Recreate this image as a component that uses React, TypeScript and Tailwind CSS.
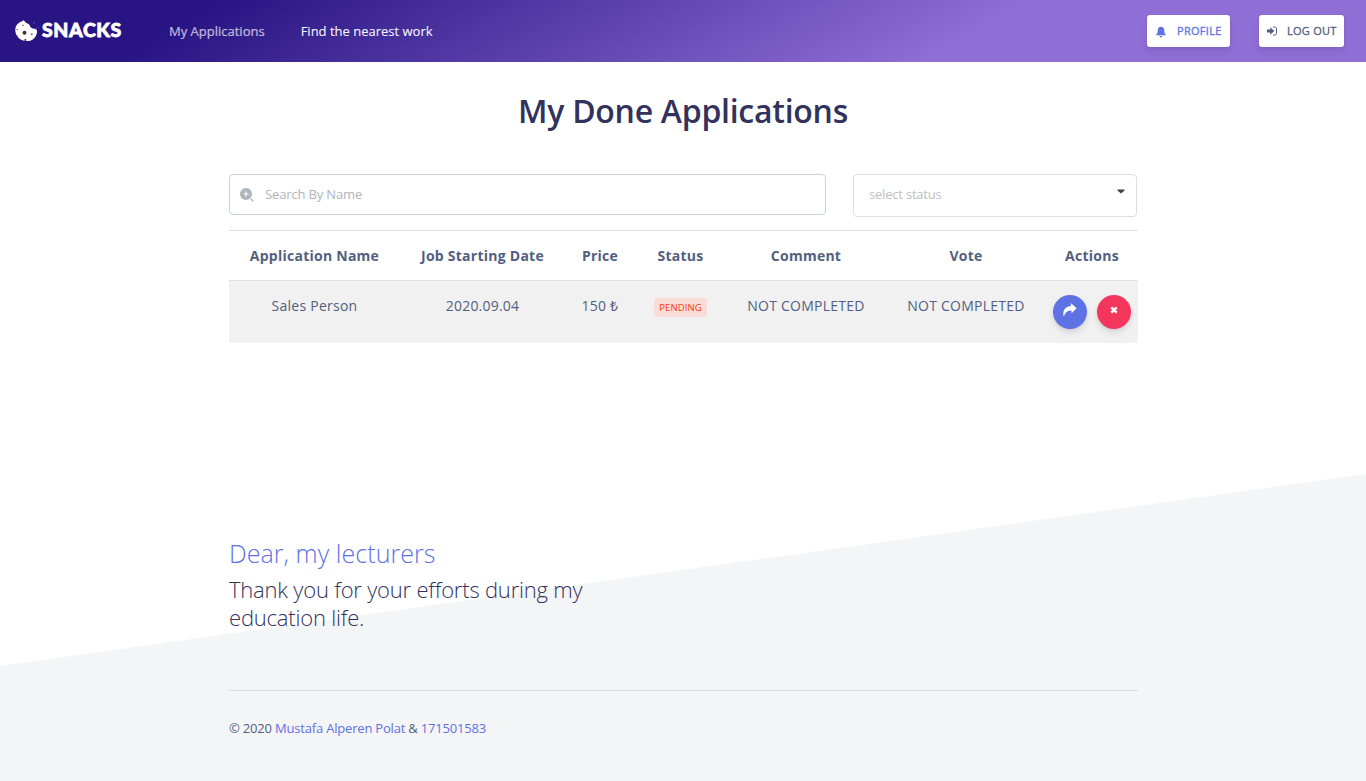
const columns = ["Application Name", "Job Starting Date", "Price", "Status", "Comment", "Vote", "Actions"];
const gridCols = "grid grid-cols-[171px_165px_70px_91px_160px_160px_92px] text-center";

function Cookie() {
  return (
    <svg width="26" height="26" viewBox="0 0 26 26" className="block">
      <path d="M9.500 2.200C11 3 11.200 4.300 12.500 5c1.200.7 2.300.8 3 2 .7 1.300 1 2.200 2.300 3 1.500.9 3.300.5 4.500 1.500 1.200 1 .7 3.500 0 5.500-1.500 4.200-5.600 6.400-10 6C6 22.600 1.900 18.600 1.300 13 1 9.200 2.200 6.600 4.800 4.900 6 4.100 8 3.200 9.500 2.200z" fill="#fff" />
      <circle cx="10.500" cy="14.800" r="2" fill="#4b2f2c" />
      <circle cx="9" cy="7.200" r=".8" fill="#756482" />
      <circle cx="3.200" cy="11.500" r=".8" fill="#756482" />
      <circle cx="17.800" cy="16.200" r=".9" fill="#6e5e62" />
      <circle cx="11.300" cy="22" r="1" fill="#4b2f2c" />
      <circle cx="3.400" cy="18.300" r=".7" fill="#756482" />
      <circle cx="20" cy="5" r="1" fill="#47379a" />
      <circle cx="22.300" cy="10.300" r=".7" fill="#5d4ca8" />
      <circle cx="24.600" cy="9.500" r=".6" fill="#47379a" />
    </svg>
  );
}

function Bell() {
  return (
    <svg width="10" height="12" viewBox="0 0 10 12" fill="currentColor" className="mt-[1px]">
      <path d="M5 .8c2 0 3.100 1.300 3.200 3.100.1 2.300.3 3.400 1.400 4.400v1H.4v-1C1.500 7.300 1.700 6.200 1.800 3.900 1.900 2.100 3 .8 5 .8zM3.400 10h3.200c-.2.8-.8 1.300-1.600 1.300S3.600 10.800 3.400 10z" />
    </svg>
  );
}

function SignIn() {
  return (
    <svg width="10" height="10" viewBox="0 0 10 10" fill="currentColor">
      <path d="M0 3.400h3.200V1.200L7.300 5 3.200 8.800V6.600H0z" />
      <path d="M6 1h1.700C8.900 1 9.500 1.600 9.500 2.700v4.600C9.500 8.400 8.900 9 7.700 9H6" fill="none" stroke="currentColor" strokeWidth="1" />
    </svg>
  );
}

function Header() {
  return (
    <header className="flex h-[62px] items-center bg-[linear-gradient(150deg,#281483_15%,#8f6ed5_70%)] pl-[14px] pr-[22px]">
      <div className="flex w-[155px] items-center">
        <Cookie />
        <span className="-mt-[2px] ml-[2px] font-[Lato] text-[19.500px] leading-none font-black tracking-[.6px] text-white [-webkit-text-stroke:0.8px_white]">SNACKS</span>
      </div>
      <nav className="flex gap-[36px] pt-[2px] text-[13px]">
        <a className="text-white/65 [-webkit-text-stroke:0.15px_currentColor]">My Applications</a>
        <a className="text-white/95 [-webkit-text-stroke:0.15px_currentColor]">Find the nearest work</a>
      </nav>
      <div className="ml-auto flex gap-[29px] text-[11px]">
        <button className="flex h-8 w-[83px] items-center rounded-[3px] bg-white pl-[9px] text-[#5e72e4] shadow-[0_4px_6px_rgba(50,50,93,.11),0_1px_3px_rgba(0,0,0,.08)]">
          <Bell />
          <span className="ml-[11px] tracking-[.3px] [-webkit-text-stroke:0.3px_currentColor]">PROFILE</span>
        </button>
        <button className="flex h-8 w-[85px] items-center rounded-[3px] bg-white pl-[8px] text-[#525f7f] shadow-[0_4px_6px_rgba(50,50,93,.11),0_1px_3px_rgba(0,0,0,.08)]">
          <SignIn />
          <span className="ml-[10px] tracking-[.27px] [-webkit-text-stroke:0.3px_currentColor]">LOG OUT</span>
        </button>
      </div>
    </header>
  );
}

function Filters() {
  return (
    <div className="flex items-start gap-[27px]">
      <div className="flex h-[41px] w-[597px] items-center rounded-[4px] border border-[#cad1d7] pl-[10px] text-[#adb5bd]">
        <svg width="14" height="14" viewBox="0 0 14 14">
          <circle cx="6" cy="6" r="6" fill="#adb5bd" />
          <path d="M6 3.500v5M3.500 6h5" stroke="#fff" strokeWidth="1.200" />
          <path d="M10.700 10.700l2.600 2.600" stroke="#adb5bd" strokeWidth="1.500" />
        </svg>
        <span className="ml-[11px] text-[13px] tracking-[-.15px]">Search By Name</span>
      </div>
      <div className="flex h-[43px] w-[284px] items-start justify-between rounded-[4px] border border-[#dededf] pt-[9px] pr-[11px] pl-[15px] text-[#bfbfbf]">
        <span className="text-[13px] leading-5 tracking-[-.2px]">select status</span>
        <svg width="8" height="5" viewBox="0 0 8 5" className="mt-[5px]">
          <path d="M.5.500h7v1L4 4.500.500 1.500z" fill="#404040" />
        </svg>
      </div>
    </div>
  );
}

function Table() {
  return (
    <div className="mt-[13px] w-[909px] text-[14px] leading-[21px] tracking-[.25px] text-[#525f7f]">
      <div className={`${gridCols} h-[50px] border-t border-[#dee2e6] pt-[14px] font-bold`}>
        {columns.map((c) => (
          <div key={c}>{c}</div>
        ))}
      </div>
      <div className={`${gridCols} h-[63px] border-t border-[#dee2e6] bg-[#f1f1f1] pt-[14px]`}>
        <div>Sales Person</div>
        <div className="tracking-[.2px]">2020.09.04</div>
        <div>150 ₺</div>
        <div className="flex justify-center">
          <span className="mt-[3px] flex h-[19px] w-[53px] items-center justify-center rounded-[3px] bg-[#fadcd8] text-[9.500px] tracking-[.1px] text-[#ff3709]">PENDING</span>
        </div>
        <div>NOT COMPLETED</div>
        <div>NOT COMPLETED</div>
        <div className="flex gap-[10px] pl-[7px]">
          <button className="flex size-[34px] justify-center rounded-full bg-[#5e72e4] pt-[8px] shadow-[0_4px_6px_rgba(50,50,93,.11),0_1px_3px_rgba(0,0,0,.08)]">
            <svg width="14" height="13" viewBox="0 0 14 13" fill="#fff">
              <path d="M7.800 0l5.800 5.200L8.600 10.200 8.400 7.400C4.900 7.500 2.500 8.800 1.200 12.800H.4C-.4 7.200 2.600 3.200 8 3z" />
            </svg>
          </button>
          <button className="flex size-[34px] justify-center rounded-full bg-[#f5365c] pt-[11px] shadow-[0_4px_6px_rgba(50,50,93,.11),0_1px_3px_rgba(0,0,0,.08)]">
            <svg width="8" height="8" viewBox="0 0 8 8">
              <path d="M1.300 1.300l5.400 5.400M6.700 1.300L1.300 6.700" stroke="#fff" strokeWidth="2.400" />
            </svg>
          </button>
        </div>
      </div>
    </div>
  );
}

export default function App() {
  return (
    <div className="h-[781px] overflow-hidden bg-white font-['Open_Sans',sans-serif]">
      <Header />
      <div className="grid">
        <div className="col-start-1 row-start-1 mt-[412px] h-[307px] bg-[#f4f5f7] [clip-path:polygon(0_192px,100%_0,100%_100%,0_100%)]" />
        <main className="z-10 col-start-1 row-start-1 h-[719px] pl-[229px]">
          <h1 className="-ml-[229px] pt-[25px] text-center text-[32px] leading-[48px] font-semibold tracking-[-.27px] text-[#32325d]">My Done Applications</h1>
          <div className="mt-[39px]">
            <Filters />
            <Table />
          </div>
          <section className="mt-[192px] w-[420px] font-light">
            <h3 className="text-[25px] leading-[36px] tracking-[.06px] text-[#5e72e4]">Dear, my lecturers</h3>
            <p className="mt-[4px] text-[22px] leading-7 tracking-[-.2px] text-[#32325d]">Thank you for your efforts during my<br />education life.</p>
          </section>
          <div className="mt-[59px] w-[909px] border-t border-[#dcdde0] pt-[27px] text-[13px] leading-5 tracking-[-.19px] text-[#525f7f]">
            © 2020 <a className="text-[#5e72e4]">Mustafa Alperen Polat</a> &amp; <a className="text-[#5e72e4]">171501583</a>
          </div>
        </main>
      </div>
    </div>
  );
}
